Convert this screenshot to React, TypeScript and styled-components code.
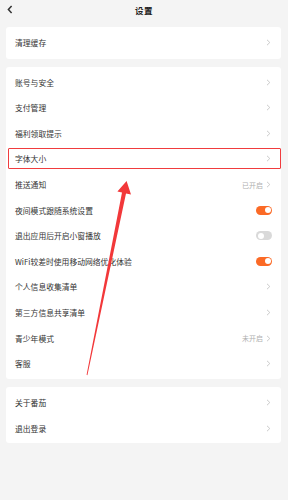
import React from 'react'
import styled, { createGlobalStyle } from "styled-components";

type Item = {
  label: string;
  status?: string;
  toggle?: boolean;
  highlight?: boolean;
};

const groups: Item[][] = [
  [{ label: "清理缓存" }],
  [
    { label: "账号与安全" },
    { label: "支付管理" },
    { label: "福利领取提示" },
    { label: "字体大小", highlight: true },
    { label: "推送通知", status: "已开启" },
    { label: "夜间模式跟随系统设置", toggle: true },
    { label: "退出应用后开启小窗播放", toggle: false },
    { label: "WiFi较差时使用移动网络优化体验", toggle: true },
    { label: "个人信息收集清单" },
    { label: "第三方信息共享清单" },
    { label: "青少年模式", status: "未开启" },
    { label: "客服" },
  ],
  [{ label: "关于番茄" }, { label: "退出登录" }],
];

const Chevron = () => (
  <svg width="5" height="7" viewBox="0 0 5 7">
    <polyline points="1,0.8 3.8,3.5 1,6.2" fill="none" stroke="#c4c4c4" strokeWidth="0.9" />
  </svg>
);

const App = () => {
  return (
    <Page>
      <GlobalStyle />
      <Header>
        <BackButton>
          <svg width="6" height="9" viewBox="0 0 6 9">
            <polyline points="4.6,1 1.4,4.5 4.6,8" fill="none" stroke="#333" strokeWidth="1.5" />
          </svg>
        </BackButton>
        <Title>设置</Title>
      </Header>
      <Groups>
        {groups.map((group, gi) => (
          <Card key={gi} $single={group.length === 1}>
            {group.map((item) => (
              <Row key={item.label}>
                <Label>{item.label}</Label>
                <Right>
                  {item.status && <Status>{item.status}</Status>}
                  {item.toggle === undefined ? <Chevron /> : <Switch $on={item.toggle} />}
                </Right>
                {item.highlight && <Highlight />}
              </Row>
            ))}
          </Card>
        ))}
      </Groups>
      <Arrow width="288" height="500" viewBox="0 0 288 500">
        <polygon
          fill="#f2383a"
          points="126.6,181 131,194.4 126,193.4 87.4,375.2 86.6,374.8 122,192.6 117.4,191.6"
        />
      </Arrow>
    </Page>
  );
};

export default App


const GlobalStyle = createGlobalStyle`
  html, body {
    margin: 0;
    background: #f4f4f4;
    font-family: "Noto Sans CJK SC", "Noto Sans", sans-serif;
  }
`;

const Page = styled.div`
  position: relative;
  width: 288px;
  height: 500px;
  overflow: hidden;
  background: #f4f4f4;
`;

const Header = styled.div`
  position: relative;
  height: 20px;
  display: flex;
  align-items: center;
  justify-content: center;
`;

const BackButton = styled.div`
  position: absolute;
  left: 7px;
  top: 5px;
  display: flex;
`;

const Title = styled.div`
  font-size: 8.5px;
  font-weight: bold;
  color: #222;
  letter-spacing: 0.5px;
`;

const Groups = styled.div`
  display: flex;
  flex-direction: column;
  gap: 8.5px;
  padding: 7px 7px 0 6px;
`;

const Card = styled.div<{ $single: boolean }>`
  background: #fff;
  border-radius: 3px;
  padding: ${(p) => (p.$single ? "3px 0" : "2.3px 0")};
`;

const Row = styled.div`
  position: relative;
  height: 25.6px;
  display: flex;
  align-items: center;
  justify-content: space-between;
  padding: 0 10px 0 9px;
`;

const Label = styled.span`
  font-size: 7.8px;
  color: #333;
`;

const Right = styled.div`
  display: flex;
  align-items: center;
  gap: 3px;
`;

const Status = styled.span`
  font-size: 7px;
  color: #b0b0b0;
`;

const Switch = styled.div<{ $on: boolean }>`
  position: relative;
  width: 16px;
  height: 9px;
  border-radius: 5px;
  margin-right: -1px;
  background: ${(p) => (p.$on ? "#fb6a26" : "#d9d9d9")};
  &::after {
    content: "";
    position: absolute;
    top: 1.5px;
    left: ${(p) => (p.$on ? "8.5px" : "1.5px")};
    width: 6px;
    height: 6px;
    border-radius: 50%;
    background: #fff;
  }
`;

const Highlight = styled.div`
  position: absolute;
  top: 2px;
  bottom: 3px;
  left: 2px;
  right: 0;
  border: 1.5px solid #f03c3e;
  border-radius: 1px;
  pointer-events: none;
`;

const Arrow = styled.svg`
  position: absolute;
  top: 0;
  left: 0;
  pointer-events: none;
`;
